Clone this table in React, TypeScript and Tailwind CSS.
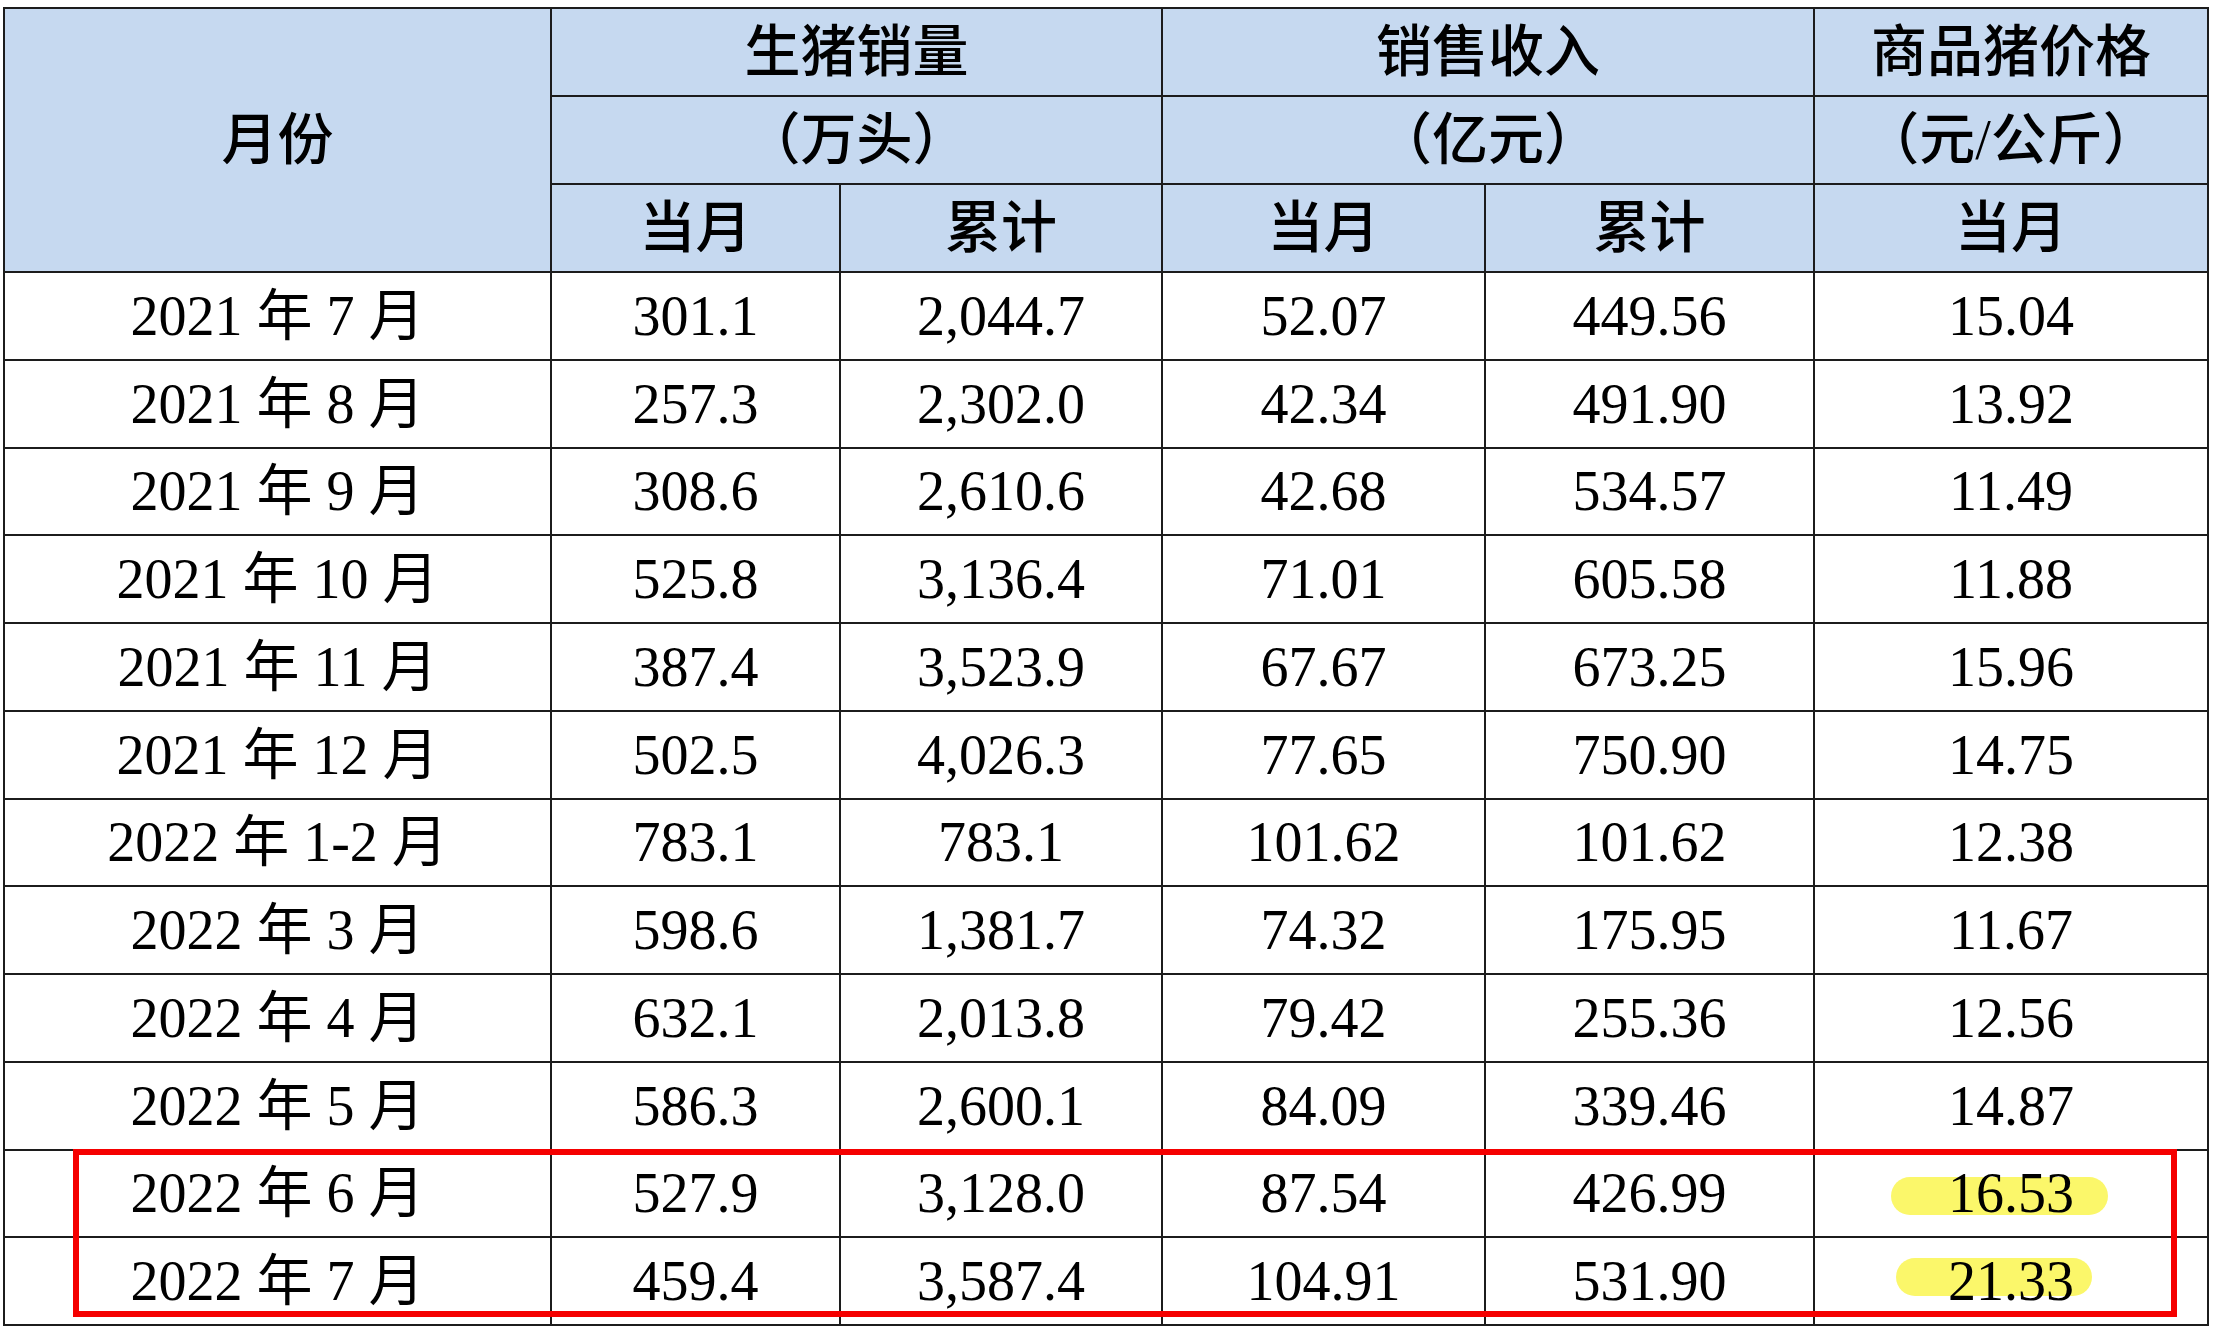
const rows: string[][] = [
  ["2021 年 7 月", "301.1", "2,044.7", "52.07", "449.56", "15.04"],
  ["2021 年 8 月", "257.3", "2,302.0", "42.34", "491.90", "13.92"],
  ["2021 年 9 月", "308.6", "2,610.6", "42.68", "534.57", "11.49"],
  ["2021 年 10 月", "525.8", "3,136.4", "71.01", "605.58", "11.88"],
  ["2021 年 11 月", "387.4", "3,523.9", "67.67", "673.25", "15.96"],
  ["2021 年 12 月", "502.5", "4,026.3", "77.65", "750.90", "14.75"],
  ["2022 年 1-2 月", "783.1", "783.1", "101.62", "101.62", "12.38"],
  ["2022 年 3 月", "598.6", "1,381.7", "74.32", "175.95", "11.67"],
  ["2022 年 4 月", "632.1", "2,013.8", "79.42", "255.36", "12.56"],
  ["2022 年 5 月", "586.3", "2,600.1", "84.09", "339.46", "14.87"],
  ["2022 年 6 月", "527.9", "3,128.0", "87.54", "426.99", "16.53"],
  ["2022 年 7 月", "459.4", "3,587.4", "104.91", "531.90", "21.33"],
];

// marker strokes over the latest two prices
const marks: Record<number, string> = {
  10: "left-[76px] top-[26px] w-[217px]",
  11: "left-[81px] top-[20px] w-[196px]",
};

const th = "border-2 border-[#1c1c1c] bg-[#c6d9f0] text-center align-middle font-medium leading-none";
const td = "border-2 border-[#1c1c1c] text-center align-middle leading-none";

export default function App() {
  return (
    <div className="relative min-h-[1330px] w-[2216px] bg-white pl-[3px] pt-[7px] text-[56px] text-black font-['Liberation_Serif','Noto_Sans_CJK_SC',serif]">
      <table className="w-[2204px] table-fixed border-collapse">
        <colgroup>
          <col className="w-[547px]" />
          <col className="w-[289px]" />
          <col className="w-[322px]" />
          <col className="w-[323px]" />
          <col className="w-[329px]" />
          <col className="w-[394px]" />
        </colgroup>
        <thead>
          <tr className="h-[88px]">
            <th rowSpan={3} className={th}>月份</th>
            <th colSpan={2} className={th}>生猪销量</th>
            <th colSpan={2} className={th}>销售收入</th>
            <th className={th}>商品猪价格</th>
          </tr>
          <tr className="h-[88px]">
            <th colSpan={2} className={th}>（万头）</th>
            <th colSpan={2} className={th}>（亿元）</th>
            <th className={th}>（元/公斤）</th>
          </tr>
          <tr className="h-[88px]">
            <th className={th}>当月</th>
            <th className={th}>累计</th>
            <th className={th}>当月</th>
            <th className={th}>累计</th>
            <th className={th}>当月</th>
          </tr>
        </thead>
        <tbody>
          {rows.map((r, i) => (
            <tr key={r[0]} className="h-[87.75px]">
              {r.map((v, j) => (
                <td key={j} className={j === 5 ? td + " relative" : td}>
                  {j === 5 && marks[i] && (
                    <span className={"absolute h-[38px] rounded-full bg-[#fbf76a] " + marks[i]} />
                  )}
                  <span className="relative">{v}</span>
                </td>
              ))}
            </tr>
          ))}
        </tbody>
      </table>

      {/* red box around June / July 2022 */}
      <div className="pointer-events-none absolute left-[73px] top-[1149px] h-[168px] w-[2104px] border-[6px] border-[#f50000]" />
    </div>
  );
}
